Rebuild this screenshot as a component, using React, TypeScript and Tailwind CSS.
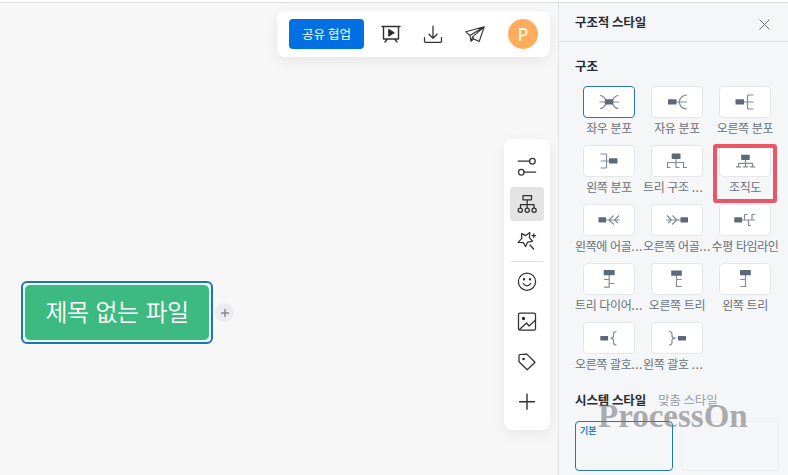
import type { ReactNode } from 'react';

type Structure = { label: string; icon: ReactNode; selected?: boolean; highlighted?: boolean; clipped?: boolean };

const block = (x: number, y: number, w = 8.5, h = 5.2) => (
  <rect x={x} y={y} width={w} height={h} rx="0.5" fill="#5d6978" stroke="none" />
);

const structures: Structure[] = [
  {
    label: '좌우 분포',
    selected: true,
    icon: (
      <>
        <path d="M16.5 16H36M17 9.5C21.5 9.5 22 13.5 24.5 16C22 18.5 21.5 22.5 17 22.5M35.5 9.5C31 9.5 30.5 13.5 28 16C30.5 18.5 31 22.5 35.5 22.5" />
        {block(21.8, 13.3)}
      </>
    ),
  },
  {
    label: '자유 분포',
    icon: (
      <>
        <path d="M25 16H36M36 9C31 9 29 12 28 16C29 20 31 23 36 23" />
        {block(17, 13.3)}
      </>
    ),
  },
  {
    label: '오른쪽 분포',
    icon: (
      <>
        <path d="M25 16H34.5M34.5 9H29.5Q28.5 9 28.5 10V22Q28.5 23 29.5 23H34.5" />
        {block(16.5, 13.3)}
      </>
    ),
  },
  {
    label: '왼쪽 분포',
    icon: (
      <>
        <path d="M17.5 16H27M17.5 9H22.5Q23.5 9 23.5 10V22Q23.5 23 22.5 23H17.5" />
        {block(26, 13.3)}
      </>
    ),
  },
  {
    label: '트리 구조 ...',
    clipped: true,
    icon: (
      <>
        <path d="M25 13V22.5H28.5M19.5 22.5H16.5V17.5H32.5V22.5H36" />
        {block(20.7, 8.5, 8.8, 5.4)}
      </>
    ),
  },
  {
    label: '조직도',
    highlighted: true,
    icon: (
      <>
        <path d="M26.5 14V21.8M19.5 21.8V18.3H33.5V21.8M17 21.8H22M24 21.8H29M31 21.8H36" />
        {block(22.2, 9.8)}
      </>
    ),
  },
  {
    label: '왼쪽에 어골...',
    clipped: true,
    icon: (
      <>
        <path d="M22 16H37M30.5 11.5L26 16L31 20.5M36 11.5L31.5 16L35 19" />
        {block(15.5, 13.3, 7.5)}
      </>
    ),
  },
  {
    label: '오른쪽 어골...',
    clipped: true,
    icon: (
      <>
        <path d="M15 16H30M17 19L20.5 16L16 11.5M21 20.5L26 16L21.5 11.5" />
        {block(29.5, 13.3, 7.5)}
      </>
    ),
  },
  {
    label: '수평 타임라인',
    icon: (
      <>
        <path d="M22 16H36M28.5 10.5H25.5V16M29.5 16V21.5H32M36 10.5H33V16" />
        {block(15.3, 13.3, 7.7)}
      </>
    ),
  },
  {
    label: '트리 다이어...',
    clipped: true,
    icon: (
      <>
        <path d="M26.2 12V24.2H21M26.2 16.5H21M26.2 20.5H31.5" />
        {block(20.7, 7, 11, 5.2)}
      </>
    ),
  },
  {
    label: '오른쪽 트리',
    icon: (
      <>
        <path d="M25.5 12V23.5H30.5M25.5 16.5H30.5" />
        {block(20.2, 7.5, 10.6, 5.2)}
      </>
    ),
  },
  {
    label: '왼쪽 트리',
    icon: (
      <>
        <path d="M26.5 12V23.5H21.5M26.5 16.5H21.5" />
        {block(21, 7, 10.8, 5.2)}
      </>
    ),
  },
  {
    label: '오른쪽 괄호...',
    clipped: true,
    icon: (
      <>
        <path d="M33.5 9.5Q30.5 9.5 30.5 12V14Q30.5 16.2 27.5 16.2Q30.5 16.2 30.5 18.5V20.5Q30.5 23 33.5 23" />
        {block(17.3, 14, 7.8, 4.5)}
      </>
    ),
  },
  {
    label: '왼쪽 괄호 ...',
    clipped: true,
    icon: (
      <>
        <path d="M18 9.5Q21 9.5 21 12V14Q21 16.2 24.5 16.2Q21 16.2 21 18.5V20.5Q21 23 18 23" />
        {block(27, 14, 8, 4.5)}
      </>
    ),
  },
];

function Glyph({ children, size = 20 }: { children: ReactNode; size?: number }) {
  return (
    <svg
      width={size}
      height={size}
      viewBox="0 0 20 20"
      className="block shrink-0"
      fill="none"
      stroke="#303133"
      strokeWidth="1.25"
      strokeLinecap="round"
      strokeLinejoin="round"
    >
      {children}
    </svg>
  );
}

function TopBar() {
  return (
    <div className="absolute top-[11px] left-[277px] flex h-[46px] w-[273px] items-center rounded-lg bg-white pl-3 shadow-[0_4px_14px_rgba(0,0,0,0.07)]">
      <button className="h-[30px] w-[75px] rounded-[4px] bg-[#0270e3] pb-px text-[12.5px] leading-[29px] text-white">공유 협업</button>
      <div className="ml-[17px] flex gap-[22px]">
        <Glyph>
          <path d="M1 2.5H19M2.5 2.5V15H17.5V2.5M6.5 15L4 18M13.5 15L16 18" strokeWidth="1.4" />
          <path d="M7.8 5.6V12L13 8.8Z" fill="#222" />
        </Glyph>
        <Glyph>
          <path d="M10 2V14M6 10.2L10 14.2L14 10.2M1.5 13.5V17.2Q1.5 18.3 2.6 18.3H17.4Q18.5 18.3 18.5 17.2V13.5" />
        </Glyph>
        <Glyph>
          <path
            d="M19.2 2.8L.8 7.8L5 11.5L6 17.3L8.8 14.9L14.2 17.5ZM19.2 2.8L5 11.5M19.2 2.8L7.6 12.8L6 17.3M7.6 12.8L8.8 14.9"
            strokeWidth="1.1"
          />
        </Glyph>
      </div>
      <div className="ml-[23px] flex size-[30px] items-center justify-center rounded-full bg-[#ffac5c] pb-px font-['Noto_Sans',sans-serif] text-[18px] leading-none text-white">
        P
      </div>
    </div>
  );
}

function ToolRail() {
  return (
    <div className="absolute top-[139px] left-[504px] flex h-[291px] w-[46px] flex-col items-center rounded-lg bg-white pt-[11px] shadow-[0_4px_14px_rgba(0,0,0,0.07)]">
      <div className="flex h-[34px] items-center">
        <Glyph>
          <circle cx="15.4" cy="4.2" r="2.8" />
          <circle cx="4.3" cy="15.2" r="2.8" />
          <path d="M1.2 4.2H12.6M7.1 15.2H18.6" />
        </Glyph>
      </div>
      <div className="mt-[3px] flex size-[34px] items-center justify-center rounded-[4px] bg-[#e3e3e3]">
        <Glyph>
          <path d="M6 1.6H14.5V5.8H6ZM10.2 5.8V14M3.5 14V10.5H17V14" />
          <circle cx="3.3" cy="16.2" r="2.1" />
          <circle cx="10.2" cy="16.2" r="2.1" />
          <circle cx="17.1" cy="16.2" r="2.1" />
        </Glyph>
      </div>
      <div className="mt-[3px] flex h-[34px] items-center">
        <Glyph>
          <path d="M4.6 2.6L8.8 4.6L12.8 1.6L12.4 6.7L15.6 10.2L10.7 11.1L8.6 15.6L6.4 11.6L1.2 11.3L4.8 7.4ZM13 14L16.6 18M16.8 2.8V6.4M15 4.6H18.6" />
        </Glyph>
      </div>
      <div className="mt-[3px] h-px w-8 bg-[#dedede]" />
      <div className="mt-[10px] flex flex-col gap-5">
        <Glyph>
          <circle cx="10" cy="9.7" r="8.6" />
          <path d="M6.2 11.6Q10 16 13.8 11.6" />
          <circle cx="7" cy="7.3" r=".6" fill="#303133" />
          <circle cx="13" cy="7.3" r=".6" fill="#303133" />
        </Glyph>
        <Glyph>
          <rect x="1.5" y="1.2" width="17" height="17" rx="1.5" />
          <circle cx="6.5" cy="6.5" r="1.1" fill="#303133" />
          <path d="M2.5 17.5L9.5 11L12 14L18 8.5" />
        </Glyph>
        <Glyph>
          <path d="M3 2.5L9.8 2.1L18 10.2L10.2 17.8L2 9.8V3.8Q2 2.6 3 2.5Z" />
          <circle cx="6.6" cy="7" r=".7" fill="#303133" />
        </Glyph>
        <Glyph>
          <path d="M10 2.3V17.3M2.5 9.8H17.5" strokeWidth="1.4" />
        </Glyph>
      </div>
    </div>
  );
}

function StructureCard({ label, icon, selected, highlighted, clipped }: Structure) {
  return (
    <div className="relative flex h-[59px] flex-col items-center">
      <div
        className={`h-8 w-[52px] rounded-[4px] border bg-white ${selected ? 'border-[#2877ae]' : 'border-[#e4e7ea]'}`}
      >
        <svg viewBox="1 1 50 30" className="block size-full" fill="none" stroke="#818b95" strokeWidth="1.2">
          {icon}
        </svg>
      </div>
      <div
        className={`text-[12px] leading-[19px] tracking-[-0.4px] [word-spacing:0.8px] whitespace-nowrap text-[#687079] ${clipped ? 'w-[68px] text-left' : 'text-center'}`}
      >
        {clipped ? label.slice(0, -3) : label}
        {clipped && <span className="tracking-[0.5px]">...</span>}
      </div>
      {highlighted && (
        <div className="absolute -top-[1px] left-[2px] h-[59px] w-16 rounded-[3px] border-4 border-[#eb5667]" />
      )}
    </div>
  );
}

function StylePanel() {
  return (
    <aside className="relative flex w-[230px] shrink-0 flex-col border-l border-[#e2e5e7] bg-[#f4f6f8]">
      <header className="flex h-[39px] shrink-0 items-center justify-between border-b border-[#dcdfe1] pr-[18px] pl-4">
        <h1 className="text-[12.5px] leading-5 font-bold tracking-[-0.1px] text-[#282b2f]">구조적 스타일</h1>
        <svg width="11" height="11" viewBox="0 0 11 11" className="mt-[4px]" fill="none" stroke="#686c70">
          <path d="M.5 .5L10.5 10.5M10.5 .5L.5 10.5" />
        </svg>
      </header>
      <div className="flex flex-col pl-4">
        <h2 className="mt-[14px] text-[12.5px] leading-5 font-bold tracking-[-0.1px] text-[#282b2f]">구조</h2>
        <div className="mt-[10px] grid w-[204px] grid-cols-[68px_68px_68px]">
          {structures.map((item) => (
            <StructureCard key={item.label} {...item} />
          ))}
        </div>
        <div className="mt-[9px] flex gap-3 leading-5 whitespace-nowrap">
          <h2 className="text-[12.5px] font-bold tracking-[-0.1px] text-[#282b2f]">시스템 스타일</h2>
          <span className="text-[12.3px] text-[#979da7]">맞춤 스타일</span>
        </div>
        <div className="mt-[11px] flex gap-2">
          <div className="h-[50px] w-[98px] rounded-[4px] border border-[#2877ae] pt-[3px] pl-1 text-[9px] leading-3 font-bold text-[#2580d8]">
            기본
          </div>
          <div className="h-[50px] w-[98px] rounded-[4px] border border-[#edeff1]" />
        </div>
      </div>
      <div className="absolute top-[393px] left-[39px] font-['Liberation_Serif',serif] text-[33px] leading-[40px] font-bold text-[#77797b]/60">
        ProcessOn
      </div>
    </aside>
  );
}

export default function App() {
  return (
    <div className="flex h-[475px] w-[788px] flex-col overflow-hidden bg-white font-['Noto_Sans_CJK_KR',sans-serif]">
      <div className="h-[3px] shrink-0 border-b border-[#dcdfe1]" />
      <div className="flex min-h-0 flex-1">
        <main className="w-[558px] shrink-0 bg-[#f7f7f7]">
          <div className="absolute top-[281px] left-[21px] flex items-center gap-[2px]">
            <div className="h-[63px] w-[192px] rounded-[6px] border-2 border-[#2074ae] bg-[#e8fbfb] p-[2px]">
              <div className="flex h-full items-center justify-center rounded-[5px] bg-[#3dba82] pb-[3px] text-[24px] leading-none font-[350] tracking-[-0.5px] [word-spacing:2px] text-white">
                제목 없는 파일
              </div>
            </div>
            <div className="flex size-[19px] items-center justify-center rounded-full bg-[#eaecef]">
              <svg width="8" height="8" viewBox="0 0 8 8" stroke="#858b94" strokeWidth="1.5">
                <path d="M4 0V8M0 4H8" />
              </svg>
            </div>
          </div>
          <TopBar />
          <ToolRail />
        </main>
        <StylePanel />
      </div>
    </div>
  );
}
